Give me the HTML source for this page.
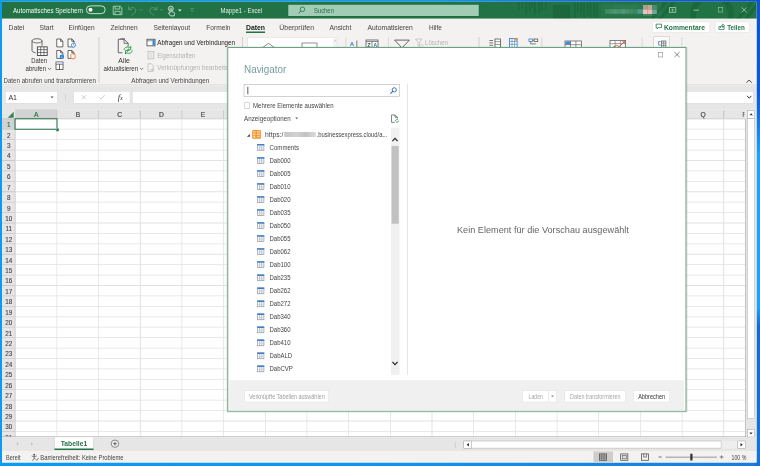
<!DOCTYPE html>
<html><head><meta charset="utf-8"><title>Excel Navigator</title>
<style>
html,body{margin:0;padding:0;}
body{width:760px;height:466px;overflow:hidden;position:relative;background:#0a9af0;font-family:"Liberation Sans",sans-serif;}
div,span.t,svg{position:absolute;}
span.t{white-space:nowrap;transform-origin:0 50%;}
svg{overflow:visible;}
#root{left:0;top:0;width:3040px;height:1864px;transform:scale(0.25);transform-origin:0 0;}
</style></head><body><div id="root">
<div style="left:0px;top:0px;width:3040px;height:1864px;background:#0c9bf0;"></div>
<div style="left:0px;top:0px;width:3040px;height:12px;background:linear-gradient(90deg,#0c9bf0 0%,#129af0 56%,#1460d6 82%,#0b52d4 100%);"></div>
<div style="left:0px;top:1840px;width:3040px;height:24px;background:linear-gradient(90deg,#0c9bf0 0%,#0f96ee 45%,#1a7cdc 100%);"></div>
<div style="left:3016px;top:0px;width:24px;height:1864px;background:linear-gradient(180deg,#0b53d4 0%,#0d58d8 20%,#1670de 25%,#18a2f8 33%,#18a2f8 66%,#1668d0 70%,#1a72d4 100%);"></div>
<div style="left:8.4px;top:6.8px;width:3018px;height:1843.2px;background:#ffffff;"></div>
<div style="left:8.4px;top:6.8px;width:3018px;height:68.4px;background:#217346;"></div>
<svg style="left:0px;top:6.8px;overflow:hidden;" width="3040" height="68.4" viewBox="0 0 760 17.1"><rect x="518.0" y="0" width="1.6" height="9" fill="rgba(10,60,30,0.2)"/><rect x="521.4" y="0" width="1.6" height="6" fill="rgba(10,60,30,0.2)"/><rect x="525.6" y="0" width="1.6" height="13" fill="rgba(10,60,30,0.2)"/><rect x="529.0" y="0" width="1.6" height="9" fill="rgba(10,60,30,0.2)"/><rect x="531.6" y="0" width="1.6" height="6" fill="rgba(10,60,30,0.2)"/><rect x="534.2" y="0" width="1.6" height="13" fill="rgba(10,60,30,0.2)"/><rect x="538.4" y="0" width="1.6" height="11" fill="rgba(10,60,30,0.2)"/><rect x="541.0" y="0" width="1.6" height="9" fill="rgba(10,60,30,0.2)"/><rect x="545.2" y="0" width="1.6" height="8" fill="rgba(10,60,30,0.2)"/><rect x="553" y="3" width="17" height="14.2" fill="rgba(10,60,30,0.2)"/><rect x="574.0" y="1" width="1.8" height="15" fill="rgba(10,60,30,0.2)"/><rect x="576.8" y="1" width="1.8" height="10" fill="rgba(10,60,30,0.2)"/><rect x="580.4" y="1" width="1.8" height="13" fill="rgba(10,60,30,0.2)"/><rect x="583.2" y="1" width="1.8" height="15" fill="rgba(10,60,30,0.2)"/><rect x="586.8" y="1" width="1.8" height="13" fill="rgba(10,60,30,0.2)"/><rect x="589.6" y="1" width="1.8" height="15" fill="rgba(10,60,30,0.2)"/><rect x="593.2" y="1" width="1.8" height="15" fill="rgba(10,60,30,0.2)"/><rect x="596.0" y="1" width="1.8" height="15" fill="rgba(10,60,30,0.2)"/><circle cx="712" cy="13" r="19" fill="none" stroke="rgba(10,60,30,0.2)" stroke-width="6"/><path d="M650 17.2L664 0H668L654 17.2Z M658 17.2L672 0H676L662 17.2Z M736 17.2L750 0H754L740 17.2Z M744 17.2L756 2V7L748 17.2Z" fill="rgba(10,60,30,0.2)"/></svg>
<span class="t" style="left:52px;top:28.44px;font-size:27.6px;line-height:27.6px;color:#f4faf6;transform:scaleX(0.8946);">Automatisches Speichern</span>
<div style="left:344px;top:21.6px;width:78.4px;height:34.4px;border:3.6px solid #fff;border-radius:20px;box-sizing:border-box;"></div>
<div style="left:353.6px;top:30.8px;width:16px;height:16px;border-radius:8px;background:#fff;"></div>
<svg style="left:451.2px;top:23.2px;" width="38.4" height="37.6" viewBox="0 0 9.6 9.4"><path d="M.5 .5H7.6L9.1 2V8.9H.5Z M2.4 .5V3.3H7V.5 M2.2 8.9V5.6H7.4V8.9" fill="none" stroke="#a9d0b8" stroke-width="0.9"/></svg>
<svg style="left:512px;top:22px;" width="36" height="40" viewBox="0 0 9 10"><path d="M.6 .8V4.2H4 M.8 4.1C2.4 1.9 5.6 1.4 7.2 3.3C8.7 5.3 7.2 7.7 3.6 9.6" fill="none" stroke="#5c9b77" stroke-width="0.9"/></svg>
<svg style="left:558.4px;top:36px;" width="12" height="8" viewBox="0 0 3 2"><path d="M0 0L1.5 1.6L3 0" fill="none" stroke="#5c9b77" stroke-width="0.7"/></svg>
<svg style="left:594.4px;top:22px;" width="36" height="40" viewBox="0 0 9 10"><path d="M8.4 .8V4.2H5 M8.2 4.1C6.6 1.9 3.4 1.4 1.8 3.3C.3 5.3 1.8 7.7 5.4 9.6" fill="none" stroke="#5c9b77" stroke-width="0.9"/></svg>
<svg style="left:640px;top:36px;" width="12" height="8" viewBox="0 0 3 2"><path d="M0 0L1.5 1.6L3 0" fill="none" stroke="#5c9b77" stroke-width="0.7"/></svg>
<svg style="left:669.2px;top:22.4px;" width="29.6" height="40" viewBox="0 0 7.4 10"><circle cx="3.6" cy="3.2" r="2.5" fill="none" stroke="#e6f1ea" stroke-width="0.8"/><path d="M2.9 7.6V3.2a.8.8 0 0 1 1.6 0V6.2L6.6 6.8C7.2 7 7.4 7.4 7.3 8L6.9 10.4H3.2L1.2 7.6C1.6 7 2.3 7.1 2.9 7.6Z" fill="#217346" stroke="#e6f1ea" stroke-width="0.8"/></svg>
<svg style="left:712px;top:38.4px;" width="14.4" height="8.8" viewBox="0 0 3.6 2.2"><path d="M0 0H3.6L1.8 2.1Z" fill="#e6f1ea"/></svg>
<svg style="left:761.6px;top:32.8px;" width="12.8" height="14.4" viewBox="0 0 3.2 3.6"><path d="M0 .3H3.2 M.2 1.6L1.6 3.2L3 1.6" fill="none" stroke="#6fa788" stroke-width="0.7"/></svg>
<span class="t" style="left:882.4px;top:28.44px;font-size:27.6px;line-height:27.6px;color:#e4efe8;transform:scaleX(0.8672);">Mappe1  -  Excel</span>
<div style="left:1152.8px;top:18.8px;width:762.4px;height:45.2px;background:#a0cdb3;box-shadow:0 0 0 2px #186a3c;"></div>
<svg style="left:1192.8px;top:26.4px;" width="28.8" height="29.6" viewBox="0 0 7.2 7.4"><circle cx="4.2" cy="2.8" r="2.3" fill="none" stroke="#217346" stroke-width="0.8"/><path d="M2.6 4.5L.4 7" stroke="#217346" stroke-width="0.9"/></svg>
<span class="t" style="left:1255.6px;top:28.04px;font-size:27.6px;line-height:27.6px;color:#2a6a47;transform:scaleX(0.8503);">Suchen</span>
<svg style="left:0px;top:0px;filter:blur(1.4px);" width="3040" height="80" viewBox="0 0 760 20"><rect x="601" y="4" width="61" height="12.4" fill="rgba(255,255,255,0.035)"/><rect x="605.00" y="9.2" width="4.1" height="4.6" fill="#3f8a62"/><rect x="609.05" y="9.2" width="4.1" height="4.6" fill="#4a906b"/><rect x="613.10" y="9.2" width="4.1" height="4.6" fill="#4f9671"/><rect x="617.15" y="9.2" width="4.1" height="4.6" fill="#4a906b"/><rect x="621.20" y="9.2" width="4.1" height="4.6" fill="#53977a"/><rect x="625.25" y="9.2" width="4.1" height="4.6" fill="#4a906b"/><rect x="629.30" y="9.2" width="4.1" height="4.6" fill="#458c66"/><rect x="633.35" y="9.2" width="4.1" height="4.6" fill="#3d8860"/><rect x="613" y="4.6" width="24" height="4.4" fill="#2c7b50"/><rect x="637.4" y="9.2" width="5.8" height="4.6" fill="#4f9a86"/><rect x="643" y="5" width="4.6" height="4.5" fill="#a89f8c"/><rect x="647.5" y="5" width="4.6" height="4.5" fill="#c4a58f"/><rect x="643" y="9.4" width="4.6" height="4.6" fill="#e9c3c4"/><rect x="647.5" y="9.4" width="4.6" height="4.6" fill="#f6b8b2"/><rect x="652" y="9.4" width="4.8" height="4.6" fill="#6aa89c"/><rect x="652" y="5" width="4.8" height="4.5" fill="#4c8c6c"/><rect x="643" y="14" width="9" height="2" fill="#3f8560"/></svg>
<svg style="left:2676px;top:28.8px;" width="28.8" height="21.6" viewBox="0 0 7.2 5.4"><rect x=".4" y=".4" width="6.4" height="4.6" fill="none" stroke="#b4d3c1" stroke-width="0.75"/><path d="M3.6 4.4V1.8M2.4 2.9L3.6 1.7L4.8 2.9" fill="none" stroke="#b4d3c1" stroke-width="0.7"/></svg>
<div style="left:2773.6px;top:38.8px;width:22.4px;height:2.8px;background:#b4d3c1;"></div>
<div style="left:2872px;top:28.8px;width:20px;height:20px;border:2.8px solid #b4d3c1;box-sizing:border-box;"></div>
<svg style="left:2966.4px;top:28.8px;" width="21.6" height="21.6" viewBox="0 0 5.4 5.4"><path d="M.2 .2L5.2 5.2M5.2 .2L.2 5.2" stroke="#c4dccd" stroke-width="0.7"/></svg>
<div style="left:8.4px;top:75.2px;width:3018px;height:264.8px;background:#f3f2f1;"></div>
<span class="t" style="left:34px;top:94.44px;font-size:28.4px;line-height:28.4px;color:#444;transform:scaleX(0.9532);">Datei</span>
<span class="t" style="left:158px;top:94.44px;font-size:28.4px;line-height:28.4px;color:#444;transform:scaleX(0.9470);">Start</span>
<span class="t" style="left:274px;top:94.44px;font-size:28.4px;line-height:28.4px;color:#444;transform:scaleX(0.9347);">Einfügen</span>
<span class="t" style="left:442px;top:94.44px;font-size:28.4px;line-height:28.4px;color:#444;transform:scaleX(0.9312);">Zeichnen</span>
<span class="t" style="left:614px;top:94.44px;font-size:28.4px;line-height:28.4px;color:#444;transform:scaleX(0.9340);">Seitenlayout</span>
<span class="t" style="left:824.8px;top:94.44px;font-size:28.4px;line-height:28.4px;color:#444;transform:scaleX(0.9332);">Formeln</span>
<span class="t" style="left:1116.8px;top:94.44px;font-size:28.4px;line-height:28.4px;color:#444;transform:scaleX(0.9797);">Überprüfen</span>
<span class="t" style="left:1317.6px;top:94.44px;font-size:28.4px;line-height:28.4px;color:#444;transform:scaleX(0.9363);">Ansicht</span>
<span class="t" style="left:1470.4px;top:94.44px;font-size:28.4px;line-height:28.4px;color:#444;transform:scaleX(0.9587);">Automatisieren</span>
<span class="t" style="left:1715.6px;top:94.44px;font-size:28.4px;line-height:28.4px;color:#444;transform:scaleX(0.9082);">Hilfe</span>
<span class="t" style="left:984px;top:94.44px;font-size:28.4px;line-height:28.4px;color:#222;font-weight:700;transform:scaleX(0.9632);">Daten</span>
<div style="left:984px;top:126.4px;width:76px;height:5.6px;background:#217346;"></div>
<div style="left:2609.2px;top:86.4px;width:230.8px;height:44.8px;background:#fff;border:2.4px solid #e1dfdd;box-sizing:border-box;border-radius:4px;"></div>
<svg style="left:2623.2px;top:95.2px;" width="24.8" height="23.2" viewBox="0 0 6.2 5.8"><path d="M.4 .4H5.8V3.9H2.6L1.4 5.2V3.9H.4Z" fill="none" stroke="#217346" stroke-width="0.8"/></svg>
<span class="t" style="left:2656px;top:94.84px;font-size:28.4px;line-height:28.4px;color:#217346;font-weight:700;transform:scaleX(0.9447);">Kommentare</span>
<div style="left:2860px;top:86.4px;width:138px;height:44.8px;background:#fff;border:2.4px solid #e1dfdd;box-sizing:border-box;border-radius:4px;"></div>
<svg style="left:2874px;top:93.6px;" width="26.4" height="25.6" viewBox="0 0 6.6 6.4"><path d="M.4 3.2V6H5.6V3.2H4.2M.4 3.2H1.8 M1.6 4.4C1.8 2.6 2.8 1.8 4.2 1.8V.5L6.2 2.3L4.2 4V2.9C3.2 2.9 2.4 3.2 1.6 4.4Z" fill="none" stroke="#217346" stroke-width="0.7"/></svg>
<span class="t" style="left:2908.8px;top:94.84px;font-size:28.4px;line-height:28.4px;color:#217346;font-weight:700;transform:scaleX(0.8754);">Teilen</span>
<svg style="left:124px;top:152.8px;" width="68" height="72" viewBox="0 0 17 18"><path d="M1 2.6C1 1.4 3.2 .5 6 .5S11 1.4 11 2.6V7.5 M1 2.6V12.4C1 13.4 2.4 14.2 4.6 14.5" fill="none" stroke="#555" stroke-width="0.9"/><path d="M1 2.6C1 3.8 3.2 4.7 6 4.7S11 3.8 11 2.6" fill="none" stroke="#555" stroke-width="0.8"/><rect x="6.4" y="8.6" width="9.8" height="8.6" fill="#fff" stroke="#444" stroke-width="0.9"/><path d="M6.4 11.4H16.2M6.4 14.3H16.2M9.7 8.6V17.2M13 8.6V17.2" stroke="#444" stroke-width="0.7"/></svg>
<span class="t" style="left:125.2px;top:226.84px;font-size:27.6px;line-height:27.6px;color:#333;transform:scaleX(0.8527);">Daten</span>
<span class="t" style="left:101.6px;top:260.04px;font-size:27.6px;line-height:27.6px;color:#333;transform:scaleX(0.8802);">abrufen</span>
<svg style="left:192px;top:271.2px;" width="12.8" height="8.8" viewBox="0 0 3.2 2.2"><path d="M0 .2L1.6 1.8L3.2 .2" fill="none" stroke="#444" stroke-width="0.7"/></svg>
<svg style="left:224.8px;top:154.4px;" width="32" height="36" viewBox="0 0 8 9"><path d="M.5 .5H4.4L6.6 2.7V8.4H.5Z M4.3 .5V2.8H6.6" fill="#fff" stroke="#444" stroke-width="0.8"/></svg>
<svg style="left:269.6px;top:154.4px;" width="32" height="36" viewBox="0 0 8 9"><path d="M.5 .5H4.4L6.6 2.7V8.4H.5Z M4.3 .5V2.8H6.6" fill="#fff" stroke="#444" stroke-width="0.8"/><circle cx="6" cy="6.6" r="2.1" fill="#fff" stroke="#2b88d8" stroke-width="0.8"/><path d="M6 5.4V6.7H7" fill="none" stroke="#2b88d8" stroke-width="0.6"/></svg>
<svg style="left:224.8px;top:200px;" width="32" height="36" viewBox="0 0 8 9"><path d="M.5 .5H4.4L6.6 2.7V8.4H.5Z M4.3 .5V2.8H6.6" fill="#fff" stroke="#444" stroke-width="0.8"/><circle cx="5.6" cy="6.8" r="2.2" fill="#1e7fd6"/><path d="M5.6 5.6V5.9M5.6 6.5V8" stroke="#fff" stroke-width="0.7"/></svg>
<svg style="left:269.6px;top:200px;" width="32" height="36" viewBox="0 0 8 9"><path d="M.5 .5H4.4L6.6 2.7V8.4H.5Z M4.3 .5V2.8H6.6" fill="#fff" stroke="#444" stroke-width="0.8"/><path d="M3.4 4.6C3.4 3.8 7.6 3.8 7.6 4.6V8.2C7.6 9 3.4 9 3.4 8.2Z" fill="#fff" stroke="#e8772e" stroke-width="0.9"/></svg>
<svg style="left:222.4px;top:246.4px;" width="32" height="34.4" viewBox="0 0 8 8.6"><rect x=".5" y=".5" width="7" height="7.4" fill="#fff" stroke="#444" stroke-width="0.8"/><path d="M.5 2.6H7.5M4 2.6V7.9" stroke="#444" stroke-width="0.8"/><rect x=".9" y=".9" width="6.2" height="1.4" fill="#c8ddf0"/></svg>
<span class="t" style="left:14.4px;top:308.48px;font-size:26.8px;line-height:26.8px;color:#444;transform:scaleX(0.9188);">Daten abrufen und transformieren</span>
<div style="left:394.4px;top:148px;width:3.2px;height:184px;background:#d2d0ce;"></div>
<svg style="left:471.2px;top:152.8px;" width="64" height="72" viewBox="0 0 16 18"><path d="M.5 1H6.4L10.4 5V8 M.5 1V14.5H4.6" fill="none" stroke="#555" stroke-width="0.9"/><path d="M2.6 .5H7.2 M6.3 1V5.1H10.4" fill="none" stroke="#555" stroke-width="0.8"/><path d="M6.2 11.6C6.6 9.2 9.6 7.8 12.2 9.4L13 8V11.6H9.8L11.2 10.4" fill="none" stroke="#2ea04a" stroke-width="1"/><path d="M14.6 12.2C14.2 14.8 11.2 16 8.6 14.4L7.8 15.8V12.2H11L9.6 13.4" fill="none" stroke="#2ea04a" stroke-width="1"/></svg>
<span class="t" style="left:473.2px;top:226.84px;font-size:27.6px;line-height:27.6px;color:#333;">Alle</span>
<span class="t" style="left:414.4px;top:260.04px;font-size:27.6px;line-height:27.6px;color:#333;transform:scaleX(0.8931);">aktualisieren</span>
<svg style="left:560px;top:271.2px;" width="12.8" height="8.8" viewBox="0 0 3.2 2.2"><path d="M0 .2L1.6 1.8L3.2 .2" fill="none" stroke="#444" stroke-width="0.7"/></svg>
<svg style="left:585.6px;top:155.2px;" width="36" height="32" viewBox="0 0 9 8"><rect x=".5" y=".5" width="8" height="6.6" fill="#fff" stroke="#444" stroke-width="0.8"/><rect x="6" y=".9" width="2.2" height="5.8" fill="#2b88d8"/><path d="M.5 2H6" stroke="#444" stroke-width="0.6"/></svg>
<span class="t" style="left:628.8px;top:158.44px;font-size:27.6px;line-height:27.6px;color:#222;transform:scaleX(0.9052);">Abfragen und Verbindungen</span>
<svg style="left:590.4px;top:204px;" width="28" height="34.4" viewBox="0 0 7 8.6"><rect x=".5" y=".5" width="5.8" height="7.4" fill="none" stroke="#bdbbb9" stroke-width="0.8"/><path d="M2 2.6H4.8M2 4.2H4.8M2 5.8H4.8" stroke="#c8c6c4" stroke-width="0.6"/></svg>
<span class="t" style="left:628.8px;top:208.04px;font-size:27.6px;line-height:27.6px;color:#b5b3b1;transform:scaleX(0.8735);">Eigenschaften</span>
<svg style="left:590.4px;top:252.8px;" width="32" height="36" viewBox="0 0 8 9"><path d="M.5 .5H3.8L5.6 2.3V8.2H.5Z" fill="none" stroke="#bdbbb9" stroke-width="0.8"/><path d="M3 6.4H6.6" stroke="#c8c6c4" stroke-width="1.4"/></svg>
<span class="t" style="left:628.8px;top:258.44px;font-size:27.6px;line-height:27.6px;color:#b5b3b1;transform:scaleX(0.9240);">Verknüpfungen bearbeiten</span>
<span class="t" style="left:525.2px;top:308.48px;font-size:26.8px;line-height:26.8px;color:#444;transform:scaleX(0.9347);">Abfragen und Verbindungen</span>
<div style="left:969.2px;top:148px;width:3.2px;height:184px;background:#c8c6c4;"></div>
<div style="left:990.4px;top:148px;width:360px;height:56px;background:#fff;border:2.8px solid #d8d6d4;box-sizing:border-box;"></div>
<div style="left:1332px;top:149.6px;width:17.6px;height:52px;background:#f3f2f1;"></div>
<svg style="left:1336px;top:160px;" width="10.4" height="8" viewBox="0 0 2.6 2"><path d="M0 1.6L1.3 .2L2.6 1.6" fill="none" stroke="#999" stroke-width="0.5"/></svg>
<svg style="left:1046px;top:171.2px;" width="56" height="24" viewBox="0 0 14 6"><path d="M0 5.6L7 .6L14 5.6" fill="none" stroke="#666" stroke-width="0.8"/></svg>
<svg style="left:1206.4px;top:170.4px;" width="61.6" height="20" viewBox="0 0 15.4 5"><rect x=".5" y=".5" width="15" height="6" fill="none" stroke="#777" stroke-width="0.8"/></svg>
<div style="left:1381.6px;top:148px;width:3.2px;height:184px;background:#d2d0ce;"></div>
<span class="t" style="left:1400px;top:164.36px;font-size:22.4px;line-height:22.4px;color:#2b6fc4;font-weight:700;transform:scaleX(0.9891);">A</span>
<div style="left:1425.6px;top:162.4px;width:3.2px;height:28px;background:#555;"></div>
<svg style="left:1462.4px;top:158.4px;" width="52" height="32" viewBox="0 0 13 8"><rect x=".5" y=".5" width="12" height="9" fill="#fff" stroke="#555" stroke-width="0.8"/><path d="M.5 2H12.5 M6.5 2V9" stroke="#555" stroke-width="0.7"/></svg>
<span class="t" style="left:1468.8px;top:171.24px;font-size:18.4px;line-height:18.4px;color:#444;font-weight:700;transform:scaleX(1.2100);">Z</span>
<span class="t" style="left:1493.6px;top:171.24px;font-size:18.4px;line-height:18.4px;color:#2b6fc4;font-weight:700;transform:scaleX(1.0837);">A</span>
<div style="left:1552.8px;top:148px;width:3.2px;height:184px;background:#d2d0ce;"></div>
<svg style="left:1576px;top:158.4px;" width="64" height="32" viewBox="0 0 16 8"><path d="M.6 .6H15.4L8 8.4Z" fill="none" stroke="#555" stroke-width="0.9"/></svg>
<svg style="left:1660px;top:153.6px;" width="36" height="36" viewBox="0 0 9 9"><path d="M.5 .5H7L4.6 3.6V8L3 7.2V3.6Z" fill="none" stroke="#c0bebc" stroke-width="0.8"/><path d="M5.6 5.4L8.4 8.2M8.4 5.4L5.6 8.2" stroke="#c8c6c4" stroke-width="0.7"/></svg>
<span class="t" style="left:1700px;top:158.44px;font-size:27.6px;line-height:27.6px;color:#b5b3b1;transform:scaleX(0.8816);">Löschen</span>
<div style="left:1914.4px;top:148px;width:3.2px;height:184px;background:#d2d0ce;"></div>
<svg style="left:1956px;top:154.4px;" width="48" height="36" viewBox="0 0 12 9"><path d="M.4 2H4M.4 4.4H4M.4 6.8H4" stroke="#555" stroke-width="0.8"/><rect x="6" y=".5" width="5.4" height="9" fill="#fff" stroke="#555" stroke-width="0.8"/><path d="M6 3.2H11.4M6 6H11.4" stroke="#555" stroke-width="0.6"/></svg>
<svg style="left:2036px;top:152px;" width="36" height="38.4" viewBox="0 0 9 9.6"><rect x=".5" y=".5" width="7.6" height="9" fill="#fff" stroke="#3b78c4" stroke-width="0.8"/><path d="M.5 3.4H8.1M.5 6.3H8.1M3 .5V9.5M5.6 .5V9.5" stroke="#3b78c4" stroke-width="0.6"/><path d="M5.4 .4L7 2.6L8.6 .2" fill="#f0a030" stroke="#e07a1a" stroke-width="0.6"/></svg>
<svg style="left:2114.4px;top:153.6px;" width="40" height="24" viewBox="0 0 10 6"><rect x=".5" y=".5" width="3.4" height="2.4" fill="#fff" stroke="#3b78c4" stroke-width="0.8"/><rect x="5.6" y=".5" width="3.6" height="2.4" fill="#fff" stroke="#555" stroke-width="0.8"/><path d="M3.9 1.7H5.6 M2.2 2.9V5.4H7.4" fill="none" stroke="#555" stroke-width="0.7"/></svg>
<div style="left:2165.6px;top:148px;width:3.2px;height:184px;background:#d2d0ce;"></div>
<svg style="left:2258.4px;top:161.6px;" width="72" height="32" viewBox="0 0 18 8"><rect x=".5" y=".5" width="16.4" height="9" fill="#fff" stroke="#666" stroke-width="0.8"/><rect x=".9" y=".9" width="5" height="3.2" fill="#3b8ae0"/><path d="M.5 4.2H16.9M6 .5V9.5M11.4 .5V9.5" stroke="#666" stroke-width="0.7"/></svg>
<svg style="left:2438.4px;top:160px;" width="68" height="32" viewBox="0 0 17 8"><rect x=".5" y=".5" width="15.6" height="9" fill="#fff" stroke="#666" stroke-width="0.8"/><path d="M.5 3.6H16.1M5.6 .5V9.5M10.8 .5V9.5" stroke="#666" stroke-width="0.6"/><path d="M3 7.6L7 5.4L10 6.6L14.8 1.6" fill="none" stroke="#e0453a" stroke-width="0.9"/><path d="M12.6 1.2H15.2V3.8" fill="none" stroke="#e0453a" stroke-width="0.8"/></svg>
<div style="left:2567.2px;top:148px;width:3.2px;height:184px;background:#d2d0ce;"></div>
<div style="left:2613.6px;top:146.4px;width:66.4px;height:80px;background:#fafafa;border:2.8px solid #bdbbb9;box-sizing:border-box;"></div>
<svg style="left:2630.4px;top:162.4px;" width="36" height="28" viewBox="0 0 9 7"><path d="M3 1H1.2V4.6H3" fill="none" stroke="#3b78c4" stroke-width="0.8"/><rect x="4" y=".5" width="4.4" height="7" fill="#fff" stroke="#555" stroke-width="0.7"/><path d="M4 2.6H8.4M4 4.8H8.4M6.2 .5V7" stroke="#555" stroke-width="0.6"/></svg>
<div style="left:2725.6px;top:148px;width:3.2px;height:184px;background:#d2d0ce;"></div>
<svg style="left:2985.2px;top:318.4px;" width="23.2" height="14.4" viewBox="0 0 5.8 3.6"><path d="M.3 3.2L2.9 .5L5.5 3.2" fill="none" stroke="#444" stroke-width="1"/></svg>
<div style="left:8.4px;top:337.6px;width:3018px;height:3.2px;background:#d6d4d2;"></div>
<div style="left:8.4px;top:340.8px;width:3018px;height:96px;background:#e6e6e6;"></div>
<div style="left:20px;top:364px;width:209.6px;height:50.4px;background:#fff;border:2.4px solid #d0d0d0;box-sizing:border-box;"></div>
<span class="t" style="left:33.6px;top:375.04px;font-size:28px;line-height:28px;color:#333;">A1</span>
<svg style="left:202.4px;top:385.6px;" width="12.8" height="8" viewBox="0 0 3.2 2"><path d="M0 0H3.2L1.6 1.8Z" fill="#555"/></svg>
<div style="left:260.8px;top:377.6px;width:3.6px;height:3.6px;background:#aaa;"></div>
<div style="left:260.8px;top:387.2px;width:3.6px;height:3.6px;background:#aaa;"></div>
<div style="left:260.8px;top:396.8px;width:3.6px;height:3.6px;background:#aaa;"></div>
<div style="left:294.4px;top:364px;width:226.4px;height:50.4px;background:#fff;border:2.4px solid #d0d0d0;box-sizing:border-box;"></div>
<svg style="left:325.6px;top:380px;" width="18.4" height="18.4" viewBox="0 0 4.6 4.6"><path d="M.2 .2L4.4 4.4M4.4 .2L.2 4.4" stroke="#b8b8b8" stroke-width="0.7"/></svg>
<svg style="left:396px;top:378.4px;" width="24" height="20" viewBox="0 0 6 5"><path d="M.3 2.8L2.2 4.6L5.7 .4" fill="none" stroke="#b8b8b8" stroke-width="0.7"/></svg>
<span class="t" style="left:471.2px;top:368.8px;font-size:34.4px;line-height:36px;color:#333;font-family:'Liberation Serif',serif;font-style:italic;">f<span style="font-size:22.4px;">x</span></span>
<div style="left:528px;top:364px;width:2485.6px;height:50.4px;background:#fff;border:2.4px solid #d0d0d0;box-sizing:border-box;"></div>
<svg style="left:2986.8px;top:382px;" width="20" height="12.8" viewBox="0 0 5 3.2"><path d="M.3 .3L2.5 2.7L4.7 .3" fill="none" stroke="#333" stroke-width="1"/></svg>
<div style="left:8px;top:436.8px;width:2972.8px;height:38.4px;background:#e6e6e6;"></div>
<div style="left:8px;top:436.8px;width:52.8px;height:1310.4px;background:#e6e6e6;"></div>
<div style="left:60.8px;top:436.8px;width:166.72px;height:38.4px;background:#d2d2d2;"></div>
<div style="left:8px;top:475.2px;width:52.8px;height:41.68px;background:#d2d2d2;"></div>
<svg style="left:29.6px;top:445.6px;" width="25.6" height="25.6" viewBox="0 0 6.4 6.4"><path d="M6.2 .2V6.2H.2Z" fill="#3f7f5c"/></svg>
<div style="left:225.92px;top:440.8px;width:3.2px;height:34.4px;background:#c4c4c4;"></div>
<span class="t" style="left:136.44px;top:445.28px;font-size:26.8px;line-height:26.8px;color:#217346;-webkit-text-stroke:0.72px #217346;">A</span>
<div style="left:392.64px;top:440.8px;width:3.2px;height:34.4px;background:#c4c4c4;"></div>
<span class="t" style="left:303.16px;top:445.28px;font-size:26.8px;line-height:26.8px;color:#444;-webkit-text-stroke:0.72px #444;">B</span>
<div style="left:559.36px;top:440.8px;width:3.2px;height:34.4px;background:#c4c4c4;"></div>
<span class="t" style="left:469.12px;top:445.28px;font-size:26.8px;line-height:26.8px;color:#444;-webkit-text-stroke:0.72px #444;">C</span>
<div style="left:726.08px;top:440.8px;width:3.2px;height:34.4px;background:#c4c4c4;"></div>
<span class="t" style="left:635.84px;top:445.28px;font-size:26.8px;line-height:26.8px;color:#444;-webkit-text-stroke:0.72px #444;">D</span>
<div style="left:892.8px;top:440.8px;width:3.2px;height:34.4px;background:#c4c4c4;"></div>
<span class="t" style="left:803.32px;top:445.28px;font-size:26.8px;line-height:26.8px;color:#444;-webkit-text-stroke:0.72px #444;">E</span>
<div style="left:1059.52px;top:440.8px;width:3.2px;height:34.4px;background:#c4c4c4;"></div>
<span class="t" style="left:970.76px;top:445.28px;font-size:26.8px;line-height:26.8px;color:#444;-webkit-text-stroke:0.72px #444;">F</span>
<div style="left:1226.24px;top:440.8px;width:3.2px;height:34.4px;background:#c4c4c4;"></div>
<span class="t" style="left:1135.24px;top:445.28px;font-size:26.8px;line-height:26.8px;color:#444;-webkit-text-stroke:0.72px #444;">G</span>
<div style="left:1392.96px;top:440.8px;width:3.2px;height:34.4px;background:#c4c4c4;"></div>
<span class="t" style="left:1302.72px;top:445.28px;font-size:26.8px;line-height:26.8px;color:#444;-webkit-text-stroke:0.72px #444;">H</span>
<div style="left:1559.68px;top:440.8px;width:3.2px;height:34.4px;background:#c4c4c4;"></div>
<span class="t" style="left:1475.4px;top:445.28px;font-size:26.8px;line-height:26.8px;color:#444;-webkit-text-stroke:0.72px #444;">I</span>
<div style="left:1726.4px;top:440.8px;width:3.2px;height:34.4px;background:#c4c4c4;"></div>
<span class="t" style="left:1639.12px;top:445.28px;font-size:26.8px;line-height:26.8px;color:#444;-webkit-text-stroke:0.72px #444;">J</span>
<div style="left:1893.12px;top:440.8px;width:3.2px;height:34.4px;background:#c4c4c4;"></div>
<span class="t" style="left:1803.64px;top:445.28px;font-size:26.8px;line-height:26.8px;color:#444;-webkit-text-stroke:0.72px #444;">K</span>
<div style="left:2059.84px;top:440.8px;width:3.2px;height:34.4px;background:#c4c4c4;"></div>
<span class="t" style="left:1971.84px;top:445.28px;font-size:26.8px;line-height:26.8px;color:#444;-webkit-text-stroke:0.72px #444;">L</span>
<div style="left:2226.56px;top:440.8px;width:3.2px;height:34.4px;background:#c4c4c4;"></div>
<span class="t" style="left:2134.84px;top:445.28px;font-size:26.8px;line-height:26.8px;color:#444;-webkit-text-stroke:0.72px #444;">M</span>
<div style="left:2393.28px;top:440.8px;width:3.2px;height:34.4px;background:#c4c4c4;"></div>
<span class="t" style="left:2303.04px;top:445.28px;font-size:26.8px;line-height:26.8px;color:#444;-webkit-text-stroke:0.72px #444;">N</span>
<div style="left:2560px;top:440.8px;width:3.2px;height:34.4px;background:#c4c4c4;"></div>
<span class="t" style="left:2469px;top:445.28px;font-size:26.8px;line-height:26.8px;color:#444;-webkit-text-stroke:0.72px #444;">O</span>
<div style="left:2726.72px;top:440.8px;width:3.2px;height:34.4px;background:#c4c4c4;"></div>
<span class="t" style="left:2637.24px;top:445.28px;font-size:26.8px;line-height:26.8px;color:#444;-webkit-text-stroke:0.72px #444;">P</span>
<div style="left:2893.44px;top:440.8px;width:3.2px;height:34.4px;background:#c4c4c4;"></div>
<span class="t" style="left:2802.44px;top:445.28px;font-size:26.8px;line-height:26.8px;color:#444;-webkit-text-stroke:0.72px #444;">Q</span>
<div style="left:2895.04px;top:436.8px;width:83.36px;height:38.4px;overflow:hidden;"><span class="t" style="left:73.76px;top:8.4px;font-size:26.8px;line-height:28px;color:#444;">R</span></div>
<div style="left:8px;top:473.6px;width:2972.8px;height:3.2px;background:#c4c4c4;"></div>
<div style="left:225.92px;top:476.8px;width:3.2px;height:1270.4px;background:#e2e2e2;"></div>
<div style="left:392.64px;top:476.8px;width:3.2px;height:1270.4px;background:#e2e2e2;"></div>
<div style="left:559.36px;top:476.8px;width:3.2px;height:1270.4px;background:#e2e2e2;"></div>
<div style="left:726.08px;top:476.8px;width:3.2px;height:1270.4px;background:#e2e2e2;"></div>
<div style="left:892.8px;top:476.8px;width:3.2px;height:1270.4px;background:#e2e2e2;"></div>
<div style="left:1059.52px;top:476.8px;width:3.2px;height:1270.4px;background:#e2e2e2;"></div>
<div style="left:1226.24px;top:476.8px;width:3.2px;height:1270.4px;background:#e2e2e2;"></div>
<div style="left:1392.96px;top:476.8px;width:3.2px;height:1270.4px;background:#e2e2e2;"></div>
<div style="left:1559.68px;top:476.8px;width:3.2px;height:1270.4px;background:#e2e2e2;"></div>
<div style="left:1726.4px;top:476.8px;width:3.2px;height:1270.4px;background:#e2e2e2;"></div>
<div style="left:1893.12px;top:476.8px;width:3.2px;height:1270.4px;background:#e2e2e2;"></div>
<div style="left:2059.84px;top:476.8px;width:3.2px;height:1270.4px;background:#e2e2e2;"></div>
<div style="left:2226.56px;top:476.8px;width:3.2px;height:1270.4px;background:#e2e2e2;"></div>
<div style="left:2393.28px;top:476.8px;width:3.2px;height:1270.4px;background:#e2e2e2;"></div>
<div style="left:2560px;top:476.8px;width:3.2px;height:1270.4px;background:#e2e2e2;"></div>
<div style="left:2726.72px;top:476.8px;width:3.2px;height:1270.4px;background:#e2e2e2;"></div>
<div style="left:2893.44px;top:476.8px;width:3.2px;height:1270.4px;background:#e2e2e2;"></div>
<div style="left:59.2px;top:476.8px;width:3.2px;height:1270.4px;background:#c4c4c4;"></div>
<div style="left:60.8px;top:515.28px;width:2920px;height:3.2px;background:#e2e2e2;"></div>
<div style="left:8px;top:515.28px;width:52.8px;height:3.2px;background:#c9c9c9;"></div>
<span class="t" style="left:28.12px;top:485.28px;font-size:27.6px;line-height:27.6px;color:#217346;transform:scaleX(0.9225);-webkit-text-stroke:0.48px #217346;">1</span>
<div style="left:60.8px;top:556.96px;width:2920px;height:3.2px;background:#e2e2e2;"></div>
<div style="left:8px;top:556.96px;width:52.8px;height:3.2px;background:#c9c9c9;"></div>
<span class="t" style="left:28.12px;top:526.96px;font-size:27.6px;line-height:27.6px;color:#444;transform:scaleX(0.9225);-webkit-text-stroke:0.48px #444;">2</span>
<div style="left:60.8px;top:598.64px;width:2920px;height:3.2px;background:#e2e2e2;"></div>
<div style="left:8px;top:598.64px;width:52.8px;height:3.2px;background:#c9c9c9;"></div>
<span class="t" style="left:28.12px;top:568.64px;font-size:27.6px;line-height:27.6px;color:#444;transform:scaleX(0.9225);-webkit-text-stroke:0.48px #444;">3</span>
<div style="left:60.8px;top:640.32px;width:2920px;height:3.2px;background:#e2e2e2;"></div>
<div style="left:8px;top:640.32px;width:52.8px;height:3.2px;background:#c9c9c9;"></div>
<span class="t" style="left:28.12px;top:610.32px;font-size:27.6px;line-height:27.6px;color:#444;transform:scaleX(0.9225);-webkit-text-stroke:0.48px #444;">4</span>
<div style="left:60.8px;top:682px;width:2920px;height:3.2px;background:#e2e2e2;"></div>
<div style="left:8px;top:682px;width:52.8px;height:3.2px;background:#c9c9c9;"></div>
<span class="t" style="left:28.12px;top:652px;font-size:27.6px;line-height:27.6px;color:#444;transform:scaleX(0.9225);-webkit-text-stroke:0.48px #444;">5</span>
<div style="left:60.8px;top:723.68px;width:2920px;height:3.2px;background:#e2e2e2;"></div>
<div style="left:8px;top:723.68px;width:52.8px;height:3.2px;background:#c9c9c9;"></div>
<span class="t" style="left:28.12px;top:693.68px;font-size:27.6px;line-height:27.6px;color:#444;transform:scaleX(0.9225);-webkit-text-stroke:0.48px #444;">6</span>
<div style="left:60.8px;top:765.36px;width:2920px;height:3.2px;background:#e2e2e2;"></div>
<div style="left:8px;top:765.36px;width:52.8px;height:3.2px;background:#c9c9c9;"></div>
<span class="t" style="left:28.12px;top:735.36px;font-size:27.6px;line-height:27.6px;color:#444;transform:scaleX(0.9225);-webkit-text-stroke:0.48px #444;">7</span>
<div style="left:60.8px;top:807.04px;width:2920px;height:3.2px;background:#e2e2e2;"></div>
<div style="left:8px;top:807.04px;width:52.8px;height:3.2px;background:#c9c9c9;"></div>
<span class="t" style="left:28.12px;top:777.04px;font-size:27.6px;line-height:27.6px;color:#444;transform:scaleX(0.9225);-webkit-text-stroke:0.48px #444;">8</span>
<div style="left:60.8px;top:848.72px;width:2920px;height:3.2px;background:#e2e2e2;"></div>
<div style="left:8px;top:848.72px;width:52.8px;height:3.2px;background:#c9c9c9;"></div>
<span class="t" style="left:28.12px;top:818.72px;font-size:27.6px;line-height:27.6px;color:#444;transform:scaleX(0.9225);-webkit-text-stroke:0.48px #444;">9</span>
<div style="left:60.8px;top:890.4px;width:2920px;height:3.2px;background:#e2e2e2;"></div>
<div style="left:8px;top:890.4px;width:52.8px;height:3.2px;background:#c9c9c9;"></div>
<span class="t" style="left:21.08px;top:860.4px;font-size:27.6px;line-height:27.6px;color:#444;transform:scaleX(0.9198);-webkit-text-stroke:0.48px #444;">10</span>
<div style="left:60.8px;top:932.08px;width:2920px;height:3.2px;background:#e2e2e2;"></div>
<div style="left:8px;top:932.08px;width:52.8px;height:3.2px;background:#c9c9c9;"></div>
<span class="t" style="left:22px;top:902.08px;font-size:27.6px;line-height:27.6px;color:#444;transform:scaleX(0.9214);-webkit-text-stroke:0.48px #444;">11</span>
<div style="left:60.8px;top:973.76px;width:2920px;height:3.2px;background:#e2e2e2;"></div>
<div style="left:8px;top:973.76px;width:52.8px;height:3.2px;background:#c9c9c9;"></div>
<span class="t" style="left:21.08px;top:943.76px;font-size:27.6px;line-height:27.6px;color:#444;transform:scaleX(0.9198);-webkit-text-stroke:0.48px #444;">12</span>
<div style="left:60.8px;top:1015.44px;width:2920px;height:3.2px;background:#e2e2e2;"></div>
<div style="left:8px;top:1015.44px;width:52.8px;height:3.2px;background:#c9c9c9;"></div>
<span class="t" style="left:21.08px;top:985.44px;font-size:27.6px;line-height:27.6px;color:#444;transform:scaleX(0.9198);-webkit-text-stroke:0.48px #444;">13</span>
<div style="left:60.8px;top:1057.12px;width:2920px;height:3.2px;background:#e2e2e2;"></div>
<div style="left:8px;top:1057.12px;width:52.8px;height:3.2px;background:#c9c9c9;"></div>
<span class="t" style="left:21.08px;top:1027.12px;font-size:27.6px;line-height:27.6px;color:#444;transform:scaleX(0.9198);-webkit-text-stroke:0.48px #444;">14</span>
<div style="left:60.8px;top:1098.8px;width:2920px;height:3.2px;background:#e2e2e2;"></div>
<div style="left:8px;top:1098.8px;width:52.8px;height:3.2px;background:#c9c9c9;"></div>
<span class="t" style="left:21.08px;top:1068.8px;font-size:27.6px;line-height:27.6px;color:#444;transform:scaleX(0.9198);-webkit-text-stroke:0.48px #444;">15</span>
<div style="left:60.8px;top:1140.48px;width:2920px;height:3.2px;background:#e2e2e2;"></div>
<div style="left:8px;top:1140.48px;width:52.8px;height:3.2px;background:#c9c9c9;"></div>
<span class="t" style="left:21.08px;top:1110.48px;font-size:27.6px;line-height:27.6px;color:#444;transform:scaleX(0.9198);-webkit-text-stroke:0.48px #444;">16</span>
<div style="left:60.8px;top:1182.16px;width:2920px;height:3.2px;background:#e2e2e2;"></div>
<div style="left:8px;top:1182.16px;width:52.8px;height:3.2px;background:#c9c9c9;"></div>
<span class="t" style="left:21.08px;top:1152.16px;font-size:27.6px;line-height:27.6px;color:#444;transform:scaleX(0.9198);-webkit-text-stroke:0.48px #444;">17</span>
<div style="left:60.8px;top:1223.84px;width:2920px;height:3.2px;background:#e2e2e2;"></div>
<div style="left:8px;top:1223.84px;width:52.8px;height:3.2px;background:#c9c9c9;"></div>
<span class="t" style="left:21.08px;top:1193.84px;font-size:27.6px;line-height:27.6px;color:#444;transform:scaleX(0.9198);-webkit-text-stroke:0.48px #444;">18</span>
<div style="left:60.8px;top:1265.52px;width:2920px;height:3.2px;background:#e2e2e2;"></div>
<div style="left:8px;top:1265.52px;width:52.8px;height:3.2px;background:#c9c9c9;"></div>
<span class="t" style="left:21.08px;top:1235.52px;font-size:27.6px;line-height:27.6px;color:#444;transform:scaleX(0.9198);-webkit-text-stroke:0.48px #444;">19</span>
<div style="left:60.8px;top:1307.2px;width:2920px;height:3.2px;background:#e2e2e2;"></div>
<div style="left:8px;top:1307.2px;width:52.8px;height:3.2px;background:#c9c9c9;"></div>
<span class="t" style="left:21.08px;top:1277.2px;font-size:27.6px;line-height:27.6px;color:#444;transform:scaleX(0.9198);-webkit-text-stroke:0.48px #444;">20</span>
<div style="left:60.8px;top:1348.88px;width:2920px;height:3.2px;background:#e2e2e2;"></div>
<div style="left:8px;top:1348.88px;width:52.8px;height:3.2px;background:#c9c9c9;"></div>
<span class="t" style="left:21.08px;top:1318.88px;font-size:27.6px;line-height:27.6px;color:#444;transform:scaleX(0.9198);-webkit-text-stroke:0.48px #444;">21</span>
<div style="left:60.8px;top:1390.56px;width:2920px;height:3.2px;background:#e2e2e2;"></div>
<div style="left:8px;top:1390.56px;width:52.8px;height:3.2px;background:#c9c9c9;"></div>
<span class="t" style="left:21.08px;top:1360.56px;font-size:27.6px;line-height:27.6px;color:#444;transform:scaleX(0.9198);-webkit-text-stroke:0.48px #444;">22</span>
<div style="left:60.8px;top:1432.24px;width:2920px;height:3.2px;background:#e2e2e2;"></div>
<div style="left:8px;top:1432.24px;width:52.8px;height:3.2px;background:#c9c9c9;"></div>
<span class="t" style="left:21.08px;top:1402.24px;font-size:27.6px;line-height:27.6px;color:#444;transform:scaleX(0.9198);-webkit-text-stroke:0.48px #444;">23</span>
<div style="left:60.8px;top:1473.92px;width:2920px;height:3.2px;background:#e2e2e2;"></div>
<div style="left:8px;top:1473.92px;width:52.8px;height:3.2px;background:#c9c9c9;"></div>
<span class="t" style="left:21.08px;top:1443.92px;font-size:27.6px;line-height:27.6px;color:#444;transform:scaleX(0.9198);-webkit-text-stroke:0.48px #444;">24</span>
<div style="left:60.8px;top:1515.6px;width:2920px;height:3.2px;background:#e2e2e2;"></div>
<div style="left:8px;top:1515.6px;width:52.8px;height:3.2px;background:#c9c9c9;"></div>
<span class="t" style="left:21.08px;top:1485.6px;font-size:27.6px;line-height:27.6px;color:#444;transform:scaleX(0.9198);-webkit-text-stroke:0.48px #444;">25</span>
<div style="left:60.8px;top:1557.28px;width:2920px;height:3.2px;background:#e2e2e2;"></div>
<div style="left:8px;top:1557.28px;width:52.8px;height:3.2px;background:#c9c9c9;"></div>
<span class="t" style="left:21.08px;top:1527.28px;font-size:27.6px;line-height:27.6px;color:#444;transform:scaleX(0.9198);-webkit-text-stroke:0.48px #444;">26</span>
<div style="left:60.8px;top:1598.96px;width:2920px;height:3.2px;background:#e2e2e2;"></div>
<div style="left:8px;top:1598.96px;width:52.8px;height:3.2px;background:#c9c9c9;"></div>
<span class="t" style="left:21.08px;top:1568.96px;font-size:27.6px;line-height:27.6px;color:#444;transform:scaleX(0.9198);-webkit-text-stroke:0.48px #444;">27</span>
<div style="left:60.8px;top:1640.64px;width:2920px;height:3.2px;background:#e2e2e2;"></div>
<div style="left:8px;top:1640.64px;width:52.8px;height:3.2px;background:#c9c9c9;"></div>
<span class="t" style="left:21.08px;top:1610.64px;font-size:27.6px;line-height:27.6px;color:#444;transform:scaleX(0.9198);-webkit-text-stroke:0.48px #444;">28</span>
<div style="left:60.8px;top:1682.32px;width:2920px;height:3.2px;background:#e2e2e2;"></div>
<div style="left:8px;top:1682.32px;width:52.8px;height:3.2px;background:#c9c9c9;"></div>
<span class="t" style="left:21.08px;top:1652.32px;font-size:27.6px;line-height:27.6px;color:#444;transform:scaleX(0.9198);-webkit-text-stroke:0.48px #444;">29</span>
<div style="left:60.8px;top:1724px;width:2920px;height:3.2px;background:#e2e2e2;"></div>
<div style="left:8px;top:1724px;width:52.8px;height:3.2px;background:#c9c9c9;"></div>
<span class="t" style="left:21.08px;top:1694px;font-size:27.6px;line-height:27.6px;color:#444;transform:scaleX(0.9198);-webkit-text-stroke:0.48px #444;">30</span>
<div style="left:8px;top:1725.6px;width:52px;height:21.6px;overflow:hidden;"><span class="t" style="left:11.84px;top:9.2px;font-size:27.6px;line-height:28px;color:#444;">31</span></div>
<div style="left:58.4px;top:472.8px;width:171.52px;height:46.48px;border:4.8px solid #217346;box-sizing:border-box;"></div>
<div style="left:223.92px;top:513.28px;width:9.6px;height:9.6px;background:#217346;border:1.6px solid #fff;box-sizing:content-box;"></div>
<div style="left:2980.8px;top:436.8px;width:45.6px;height:1312.8px;background:#e6e6e6;"></div>
<div style="left:2988.8px;top:472.8px;width:30px;height:1201.6px;background:#fff;border:2.8px solid #ababab;box-sizing:border-box;"></div>
<div style="left:2988.8px;top:440.8px;width:30px;height:33.2px;background:#fff;border:2.4px solid #999;box-sizing:border-box;"></div>
<svg style="left:2997.6px;top:452px;" width="13.6" height="8.8" viewBox="0 0 3.4 2.2"><path d="M0 2.2L1.7 .2L3.4 2.2Z" fill="#333"/></svg>
<div style="left:2988.8px;top:1716.8px;width:30px;height:32px;background:#fff;border:2.4px solid #999;box-sizing:border-box;"></div>
<svg style="left:2997.2px;top:1729.6px;" width="13.6" height="8.8" viewBox="0 0 3.4 2.2"><path d="M0 0L1.7 2L3.4 0Z" fill="#333"/></svg>
<div style="left:8.4px;top:1746px;width:2975.2px;height:3.2px;background:#a0a0a0;"></div>
<div style="left:2980px;top:475.2px;width:2.8px;height:1272px;background:#b4b4b4;"></div>
<div style="left:8.4px;top:1749.6px;width:3018px;height:56px;background:#e6e6e6;"></div>
<svg style="left:64px;top:1768px;" width="8.8" height="13.6" viewBox="0 0 2.2 3.4"><path d="M2.2 0V3.4L.1 1.7Z" fill="#c4c4c4"/></svg>
<svg style="left:124px;top:1768px;" width="8.8" height="13.6" viewBox="0 0 2.2 3.4"><path d="M0 0V3.4L2.1 1.7Z" fill="#c4c4c4"/></svg>
<div style="left:217.6px;top:1748.8px;width:156.8px;height:50.4px;background:#fff;border-left:2.4px solid #c6c6c6;border-right:2.4px solid #c6c6c6;box-sizing:border-box;"></div>
<div style="left:217.6px;top:1794.4px;width:156.8px;height:5.2px;background:#217346;"></div>
<span class="t" style="left:242.8px;top:1759.04px;font-size:28.8px;line-height:28.8px;color:#217346;font-weight:700;transform:scaleX(0.9370);">Tabelle1</span>
<svg style="left:443.2px;top:1758.4px;" width="33.6" height="33.6" viewBox="0 0 8.4 8.4"><circle cx="4.2" cy="4.2" r="3.7" fill="#f6f6f6" stroke="#6a6a6a" stroke-width="0.8"/><path d="M4.2 2.2V6.2M2.2 4.2H6.2" stroke="#5a5a5a" stroke-width="0.9"/></svg>
<div style="left:1819.2px;top:1769.6px;width:3.6px;height:3.6px;background:#aaa;"></div>
<div style="left:1819.2px;top:1777.6px;width:3.6px;height:3.6px;background:#aaa;"></div>
<div style="left:1819.2px;top:1785.6px;width:3.6px;height:3.6px;background:#aaa;"></div>
<div style="left:1854.4px;top:1763.2px;width:1032px;height:31.2px;background:#fff;border:2.4px solid #a8a8a8;box-sizing:border-box;border-radius:4px;"></div>
<div style="left:1854.4px;top:1763.2px;width:32px;height:31.2px;background:#fff;border:2.4px solid #999;box-sizing:border-box;"></div>
<svg style="left:1865.6px;top:1772px;" width="9.6" height="13.6" viewBox="0 0 2.4 3.4"><path d="M2.4 0V3.4L.2 1.7Z" fill="#222"/></svg>
<div style="left:2887.2px;top:1764px;width:63.2px;height:29.6px;background:#eeeeee;"></div>
<div style="left:2950.4px;top:1763.2px;width:32px;height:31.2px;background:#fff;border:2.4px solid #999;box-sizing:border-box;"></div>
<svg style="left:2962.4px;top:1772px;" width="9.6" height="13.6" viewBox="0 0 2.4 3.4"><path d="M0 0V3.4L2.2 1.7Z" fill="#222"/></svg>
<div style="left:8.4px;top:1805.2px;width:3018px;height:44.8px;background:#f3f2f1;"></div>
<span class="t" style="left:24px;top:1816.68px;font-size:26.4px;line-height:26.4px;color:#444;transform:scaleX(0.8410);">Bereit</span>
<svg style="left:124.8px;top:1814.4px;" width="30.4" height="30.4" viewBox="0 0 7.6 7.6"><circle cx="3" cy="1.2" r=".9" fill="#444"/><path d="M.4 2.4C2 3.2 4 3.2 5.6 2.4M3 3V4.6M3 4.6L1.4 7.2M3 4.6L4 5.6" fill="none" stroke="#444" stroke-width="0.7"/><path d="M4.4 5.8L5.4 6.9L7.3 4.6" fill="none" stroke="#444" stroke-width="0.7"/></svg>
<span class="t" style="left:160.8px;top:1816.68px;font-size:26.4px;line-height:26.4px;color:#444;transform:scaleX(0.8870);">Barrierefreiheit: Keine Probleme</span>
<div style="left:2373.6px;top:1806.4px;width:78.4px;height:44px;background:#cfcdcb;"></div>
<svg style="left:2396px;top:1814.4px;" width="32" height="28.8" viewBox="0 0 8 7.2"><rect x=".4" y=".4" width="7.2" height="6.4" fill="#bbb" stroke="#555" stroke-width="0.8"/><path d="M.4 2.5H7.6M.4 4.6H7.6M2.8 .4V6.8M5.2 .4V6.8" stroke="#555" stroke-width="0.6"/></svg>
<svg style="left:2480.8px;top:1814.4px;" width="32" height="28.8" viewBox="0 0 8 7.2"><rect x=".4" y=".4" width="7.2" height="6.4" fill="none" stroke="#555" stroke-width="0.8"/><rect x="2" y="1.8" width="4" height="3.6" fill="#ddd" stroke="#555" stroke-width="0.6"/></svg>
<svg style="left:2564px;top:1814.4px;" width="32" height="28.8" viewBox="0 0 8 7.2"><rect x=".4" y=".4" width="7.2" height="6.4" fill="none" stroke="#555" stroke-width="0.8"/><path d="M2.6 .4V3.6H5.4V.4" fill="none" stroke="#555" stroke-width="0.7"/></svg>
<div style="left:2634.4px;top:1826.4px;width:12.8px;height:3.2px;background:#777;"></div>
<div style="left:2661.6px;top:1826.8px;width:206.4px;height:2.8px;background:#777;"></div>
<div style="left:2760.8px;top:1815.2px;width:9.2px;height:27.2px;background:#333;"></div>
<div style="left:2879.2px;top:1826.4px;width:14.4px;height:3.2px;background:#777;"></div>
<div style="left:2884.8px;top:1820.8px;width:3.2px;height:14.4px;background:#777;"></div>
<span class="t" style="left:2925.6px;top:1816.68px;font-size:26.4px;line-height:26.4px;color:#444;transform:scaleX(0.7908);">100 %</span>
<div style="left:908.8px;top:188px;width:1836.8px;height:1459.2px;background:#fff;border:4.4px solid #6ca284;box-sizing:border-box;box-shadow:0 0 4.8px rgba(60,110,80,.4);"></div>
<div style="left:917.2px;top:1520.8px;width:1818.4px;height:120.4px;background:#f0f0f0;"></div>
<span class="t" style="left:976px;top:256.36px;font-size:41.6px;line-height:41.6px;color:#7a9c9d;transform:scaleX(0.9526);">Navigator</span>
<div style="left:2631.6px;top:208.8px;width:20.8px;height:20px;border:2.8px solid #777;box-sizing:border-box;"></div>
<svg style="left:2697.2px;top:208px;" width="22.4" height="20.8" viewBox="0 0 5.6 5.2"><path d="M.2 .1L5.4 5.1M5.4 .1L.2 5.1" stroke="#555" stroke-width="0.7"/></svg>
<div style="left:975.2px;top:336.8px;width:623.2px;height:50px;background:#fff;border:2.8px solid #a6a6a6;box-sizing:border-box;"></div>
<div style="left:990px;top:347.2px;width:3.2px;height:29.6px;background:#222;"></div>
<svg style="left:1560px;top:348.8px;" width="28" height="26.4" viewBox="0 0 7 6.6"><circle cx="4.3" cy="2.6" r="2.1" fill="none" stroke="#2b62ad" stroke-width="0.9"/><path d="M2.8 4.2L.4 6.3" stroke="#2b62ad" stroke-width="1.1"/></svg>
<div style="left:976px;top:410.4px;width:24px;height:24px;background:#fff;border:2.8px solid #b4b4b4;box-sizing:border-box;"></div>
<span class="t" style="left:1012.4px;top:408.08px;font-size:26.8px;line-height:26.8px;color:#444;transform:scaleX(0.9055);">Mehrere Elemente auswählen</span>
<span class="t" style="left:976px;top:462.88px;font-size:26.8px;line-height:26.8px;color:#444;transform:scaleX(0.9355);">Anzeigeoptionen</span>
<svg style="left:1181.2px;top:470.4px;" width="11.2" height="8" viewBox="0 0 2.8 2"><path d="M0 0H2.8L1.4 1.8Z" fill="#555"/></svg>
<svg style="left:1564px;top:458.4px;" width="32" height="33.6" viewBox="0 0 8 8.4"><path d="M.5 .5H4.2L6.4 2.7V4.2 M.5 .5V7.8H3.8 M4.1 .5V2.8H6.4" fill="none" stroke="#666" stroke-width="0.8"/><path d="M4.4 6.4C4.6 5 6.2 4.6 7.2 5.6M7.6 6.4C7.4 7.8 5.8 8.2 4.8 7.2" fill="none" stroke="#2ea04a" stroke-width="0.9"/></svg>
<div style="left:1564px;top:511.2px;width:33.6px;height:988px;background:#f0f0f0;"></div>
<svg style="left:1568px;top:551.2px;" width="24" height="15.2" viewBox="0 0 6 3.8"><path d="M.4 3.4L3 .6L5.6 3.4" fill="none" stroke="#222" stroke-width="1.15"/></svg>
<div style="left:1565.6px;top:584px;width:29.6px;height:311.2px;background:#c1c1c1;"></div>
<svg style="left:1568px;top:1446.4px;" width="24" height="15.2" viewBox="0 0 6 3.8"><path d="M.4 .4L3 3.2L5.6 .4" fill="none" stroke="#222" stroke-width="1.15"/></svg>
<div style="left:1628.8px;top:335.2px;width:3.2px;height:1164px;background:#dcdcdc;"></div>
<svg style="left:988.4px;top:536px;" width="11.2" height="11.2" viewBox="0 0 2.8 2.8"><path d="M2.8 0V2.8H0Z" fill="#333"/></svg>
<svg style="left:1009.2px;top:519.6px;" width="34.8" height="35.2" viewBox="0 0 8.7 8.8"><rect x="0" y="0" width="8.7" height="8.8" rx=".7" fill="#f68d22"/><rect x=".8" y=".8" width="2.6" height="1.9" fill="#fcc88f"/><rect x="4.4" y=".8" width="3.5" height="1.9" fill="#fcc88f"/><rect x=".8" y="3.4" width="2.6" height="1.9" fill="#fcc88f"/><rect x="4.4" y="3.4" width="3.5" height="1.9" fill="#fcc88f"/><rect x="4.4" y="6" width="3.5" height="1.4" fill="#fcc88f"/><path d="M2.1 5.8V7.8M1.1 6.8H3.1" stroke="#fff" stroke-width="0.8"/></svg>
<span class="t" style="left:1059.6px;top:525.68px;font-size:26.8px;line-height:26.8px;color:#444;transform:scaleX(1.0138);">https:/</span>
<div style="left:1136.8px;top:528px;width:126.4px;height:19.6px;background:linear-gradient(90deg,#c6c6c6,#d2d2d2 40%,#c2c2c2 70%,#cfcfcf 82%,#d8d8d8);filter:blur(.20px);"></div>
<span class="t" style="left:1266.4px;top:525.68px;font-size:26.8px;line-height:26.8px;color:#444;transform:scaleX(0.8761);">.businessexpress.cloud/a...</span>
<svg style="left:1028.8px;top:576.4px;" width="28" height="26.4" viewBox="0 0 7 6.6"><rect x=".35" y=".35" width="6.3" height="5.9" fill="#fff" stroke="#8e98a4" stroke-width="0.7"/><rect x="0" y="0" width="7" height="1.5" fill="#3f7fc9"/><path d="M2.45 1.5V6.2M4.55 1.5V6.2" stroke="#8a8f96" stroke-width="0.6"/><path d="M.4 3.9H6.6" stroke="#c2c6cc" stroke-width="0.5"/></svg>
<span class="t" style="left:1078px;top:576.88px;font-size:26.8px;line-height:26.8px;color:#444;transform:scaleX(0.9107);">Comments</span>
<svg style="left:1028.8px;top:628.52px;" width="28" height="26.4" viewBox="0 0 7 6.6"><rect x=".35" y=".35" width="6.3" height="5.9" fill="#fff" stroke="#8e98a4" stroke-width="0.7"/><rect x="0" y="0" width="7" height="1.5" fill="#3f7fc9"/><path d="M2.45 1.5V6.2M4.55 1.5V6.2" stroke="#8a8f96" stroke-width="0.6"/><path d="M.4 3.9H6.6" stroke="#c2c6cc" stroke-width="0.5"/></svg>
<span class="t" style="left:1078px;top:629px;font-size:26.8px;line-height:26.8px;color:#444;transform:scaleX(0.8947);">Dab000</span>
<svg style="left:1028.8px;top:680.64px;" width="28" height="26.4" viewBox="0 0 7 6.6"><rect x=".35" y=".35" width="6.3" height="5.9" fill="#fff" stroke="#8e98a4" stroke-width="0.7"/><rect x="0" y="0" width="7" height="1.5" fill="#3f7fc9"/><path d="M2.45 1.5V6.2M4.55 1.5V6.2" stroke="#8a8f96" stroke-width="0.6"/><path d="M.4 3.9H6.6" stroke="#c2c6cc" stroke-width="0.5"/></svg>
<span class="t" style="left:1078px;top:681.12px;font-size:26.8px;line-height:26.8px;color:#444;transform:scaleX(0.8947);">Dab005</span>
<svg style="left:1028.8px;top:732.76px;" width="28" height="26.4" viewBox="0 0 7 6.6"><rect x=".35" y=".35" width="6.3" height="5.9" fill="#fff" stroke="#8e98a4" stroke-width="0.7"/><rect x="0" y="0" width="7" height="1.5" fill="#3f7fc9"/><path d="M2.45 1.5V6.2M4.55 1.5V6.2" stroke="#8a8f96" stroke-width="0.6"/><path d="M.4 3.9H6.6" stroke="#c2c6cc" stroke-width="0.5"/></svg>
<span class="t" style="left:1078px;top:733.24px;font-size:26.8px;line-height:26.8px;color:#444;transform:scaleX(0.8947);">Dab010</span>
<svg style="left:1028.8px;top:784.88px;" width="28" height="26.4" viewBox="0 0 7 6.6"><rect x=".35" y=".35" width="6.3" height="5.9" fill="#fff" stroke="#8e98a4" stroke-width="0.7"/><rect x="0" y="0" width="7" height="1.5" fill="#3f7fc9"/><path d="M2.45 1.5V6.2M4.55 1.5V6.2" stroke="#8a8f96" stroke-width="0.6"/><path d="M.4 3.9H6.6" stroke="#c2c6cc" stroke-width="0.5"/></svg>
<span class="t" style="left:1078px;top:785.36px;font-size:26.8px;line-height:26.8px;color:#444;transform:scaleX(0.8947);">Dab020</span>
<svg style="left:1028.8px;top:837px;" width="28" height="26.4" viewBox="0 0 7 6.6"><rect x=".35" y=".35" width="6.3" height="5.9" fill="#fff" stroke="#8e98a4" stroke-width="0.7"/><rect x="0" y="0" width="7" height="1.5" fill="#3f7fc9"/><path d="M2.45 1.5V6.2M4.55 1.5V6.2" stroke="#8a8f96" stroke-width="0.6"/><path d="M.4 3.9H6.6" stroke="#c2c6cc" stroke-width="0.5"/></svg>
<span class="t" style="left:1078px;top:837.48px;font-size:26.8px;line-height:26.8px;color:#444;transform:scaleX(0.8947);">Dab035</span>
<svg style="left:1028.8px;top:889.12px;" width="28" height="26.4" viewBox="0 0 7 6.6"><rect x=".35" y=".35" width="6.3" height="5.9" fill="#fff" stroke="#8e98a4" stroke-width="0.7"/><rect x="0" y="0" width="7" height="1.5" fill="#3f7fc9"/><path d="M2.45 1.5V6.2M4.55 1.5V6.2" stroke="#8a8f96" stroke-width="0.6"/><path d="M.4 3.9H6.6" stroke="#c2c6cc" stroke-width="0.5"/></svg>
<span class="t" style="left:1078px;top:889.6px;font-size:26.8px;line-height:26.8px;color:#444;transform:scaleX(0.8947);">Dab050</span>
<svg style="left:1028.8px;top:941.24px;" width="28" height="26.4" viewBox="0 0 7 6.6"><rect x=".35" y=".35" width="6.3" height="5.9" fill="#fff" stroke="#8e98a4" stroke-width="0.7"/><rect x="0" y="0" width="7" height="1.5" fill="#3f7fc9"/><path d="M2.45 1.5V6.2M4.55 1.5V6.2" stroke="#8a8f96" stroke-width="0.6"/><path d="M.4 3.9H6.6" stroke="#c2c6cc" stroke-width="0.5"/></svg>
<span class="t" style="left:1078px;top:941.72px;font-size:26.8px;line-height:26.8px;color:#444;transform:scaleX(0.8947);">Dab055</span>
<svg style="left:1028.8px;top:993.36px;" width="28" height="26.4" viewBox="0 0 7 6.6"><rect x=".35" y=".35" width="6.3" height="5.9" fill="#fff" stroke="#8e98a4" stroke-width="0.7"/><rect x="0" y="0" width="7" height="1.5" fill="#3f7fc9"/><path d="M2.45 1.5V6.2M4.55 1.5V6.2" stroke="#8a8f96" stroke-width="0.6"/><path d="M.4 3.9H6.6" stroke="#c2c6cc" stroke-width="0.5"/></svg>
<span class="t" style="left:1078px;top:993.84px;font-size:26.8px;line-height:26.8px;color:#444;transform:scaleX(0.8947);">Dab062</span>
<svg style="left:1028.8px;top:1045.48px;" width="28" height="26.4" viewBox="0 0 7 6.6"><rect x=".35" y=".35" width="6.3" height="5.9" fill="#fff" stroke="#8e98a4" stroke-width="0.7"/><rect x="0" y="0" width="7" height="1.5" fill="#3f7fc9"/><path d="M2.45 1.5V6.2M4.55 1.5V6.2" stroke="#8a8f96" stroke-width="0.6"/><path d="M.4 3.9H6.6" stroke="#c2c6cc" stroke-width="0.5"/></svg>
<span class="t" style="left:1078px;top:1045.96px;font-size:26.8px;line-height:26.8px;color:#444;transform:scaleX(0.8947);">Dab100</span>
<svg style="left:1028.8px;top:1097.6px;" width="28" height="26.4" viewBox="0 0 7 6.6"><rect x=".35" y=".35" width="6.3" height="5.9" fill="#fff" stroke="#8e98a4" stroke-width="0.7"/><rect x="0" y="0" width="7" height="1.5" fill="#3f7fc9"/><path d="M2.45 1.5V6.2M4.55 1.5V6.2" stroke="#8a8f96" stroke-width="0.6"/><path d="M.4 3.9H6.6" stroke="#c2c6cc" stroke-width="0.5"/></svg>
<span class="t" style="left:1078px;top:1098.08px;font-size:26.8px;line-height:26.8px;color:#444;transform:scaleX(0.8947);">Dab235</span>
<svg style="left:1028.8px;top:1149.72px;" width="28" height="26.4" viewBox="0 0 7 6.6"><rect x=".35" y=".35" width="6.3" height="5.9" fill="#fff" stroke="#8e98a4" stroke-width="0.7"/><rect x="0" y="0" width="7" height="1.5" fill="#3f7fc9"/><path d="M2.45 1.5V6.2M4.55 1.5V6.2" stroke="#8a8f96" stroke-width="0.6"/><path d="M.4 3.9H6.6" stroke="#c2c6cc" stroke-width="0.5"/></svg>
<span class="t" style="left:1078px;top:1150.2px;font-size:26.8px;line-height:26.8px;color:#444;transform:scaleX(0.8947);">Dab262</span>
<svg style="left:1028.8px;top:1201.84px;" width="28" height="26.4" viewBox="0 0 7 6.6"><rect x=".35" y=".35" width="6.3" height="5.9" fill="#fff" stroke="#8e98a4" stroke-width="0.7"/><rect x="0" y="0" width="7" height="1.5" fill="#3f7fc9"/><path d="M2.45 1.5V6.2M4.55 1.5V6.2" stroke="#8a8f96" stroke-width="0.6"/><path d="M.4 3.9H6.6" stroke="#c2c6cc" stroke-width="0.5"/></svg>
<span class="t" style="left:1078px;top:1202.32px;font-size:26.8px;line-height:26.8px;color:#444;transform:scaleX(0.8947);">Dab272</span>
<svg style="left:1028.8px;top:1253.96px;" width="28" height="26.4" viewBox="0 0 7 6.6"><rect x=".35" y=".35" width="6.3" height="5.9" fill="#fff" stroke="#8e98a4" stroke-width="0.7"/><rect x="0" y="0" width="7" height="1.5" fill="#3f7fc9"/><path d="M2.45 1.5V6.2M4.55 1.5V6.2" stroke="#8a8f96" stroke-width="0.6"/><path d="M.4 3.9H6.6" stroke="#c2c6cc" stroke-width="0.5"/></svg>
<span class="t" style="left:1078px;top:1254.44px;font-size:26.8px;line-height:26.8px;color:#444;transform:scaleX(0.8947);">Dab340</span>
<svg style="left:1028.8px;top:1306.08px;" width="28" height="26.4" viewBox="0 0 7 6.6"><rect x=".35" y=".35" width="6.3" height="5.9" fill="#fff" stroke="#8e98a4" stroke-width="0.7"/><rect x="0" y="0" width="7" height="1.5" fill="#3f7fc9"/><path d="M2.45 1.5V6.2M4.55 1.5V6.2" stroke="#8a8f96" stroke-width="0.6"/><path d="M.4 3.9H6.6" stroke="#c2c6cc" stroke-width="0.5"/></svg>
<span class="t" style="left:1078px;top:1306.56px;font-size:26.8px;line-height:26.8px;color:#444;transform:scaleX(0.8947);">Dab360</span>
<svg style="left:1028.8px;top:1358.2px;" width="28" height="26.4" viewBox="0 0 7 6.6"><rect x=".35" y=".35" width="6.3" height="5.9" fill="#fff" stroke="#8e98a4" stroke-width="0.7"/><rect x="0" y="0" width="7" height="1.5" fill="#3f7fc9"/><path d="M2.45 1.5V6.2M4.55 1.5V6.2" stroke="#8a8f96" stroke-width="0.6"/><path d="M.4 3.9H6.6" stroke="#c2c6cc" stroke-width="0.5"/></svg>
<span class="t" style="left:1078px;top:1358.68px;font-size:26.8px;line-height:26.8px;color:#444;transform:scaleX(0.8947);">Dab410</span>
<svg style="left:1028.8px;top:1410.32px;" width="28" height="26.4" viewBox="0 0 7 6.6"><rect x=".35" y=".35" width="6.3" height="5.9" fill="#fff" stroke="#8e98a4" stroke-width="0.7"/><rect x="0" y="0" width="7" height="1.5" fill="#3f7fc9"/><path d="M2.45 1.5V6.2M4.55 1.5V6.2" stroke="#8a8f96" stroke-width="0.6"/><path d="M.4 3.9H6.6" stroke="#c2c6cc" stroke-width="0.5"/></svg>
<span class="t" style="left:1078px;top:1410.8px;font-size:26.8px;line-height:26.8px;color:#444;transform:scaleX(0.8948);">DabALD</span>
<svg style="left:1028.8px;top:1462.44px;" width="28" height="26.4" viewBox="0 0 7 6.6"><rect x=".35" y=".35" width="6.3" height="5.9" fill="#fff" stroke="#8e98a4" stroke-width="0.7"/><rect x="0" y="0" width="7" height="1.5" fill="#3f7fc9"/><path d="M2.45 1.5V6.2M4.55 1.5V6.2" stroke="#8a8f96" stroke-width="0.6"/><path d="M.4 3.9H6.6" stroke="#c2c6cc" stroke-width="0.5"/></svg>
<span class="t" style="left:1078px;top:1462.92px;font-size:26.8px;line-height:26.8px;color:#444;transform:scaleX(0.8946);">DabCVP</span>
<div style="left:975.6px;top:1560.8px;width:340.8px;height:48px;background:#fff;border:2.8px solid #dadada;box-sizing:border-box;"></div>
<span class="t" style="left:996px;top:1571.68px;font-size:26px;line-height:26px;color:#9c9c9c;transform:scaleX(0.8424);">Verknüpfte Tabellen auswählen</span>
<div style="left:2088px;top:1560.8px;width:140px;height:48px;background:#fff;border:2.8px solid #dadada;box-sizing:border-box;"></div>
<span class="t" style="left:2114.4px;top:1571.68px;font-size:26px;line-height:26px;color:#a6a6a6;transform:scaleX(0.7967);">Laden</span>
<div style="left:2192px;top:1562.4px;width:2.8px;height:44.8px;background:#e2e2e2;"></div>
<svg style="left:2204px;top:1581.6px;" width="12" height="8" viewBox="0 0 3 2"><path d="M0 0H3L1.5 1.8Z" fill="#888"/></svg>
<div style="left:2258px;top:1560.8px;width:246px;height:48px;background:#fff;border:2.8px solid #dadada;box-sizing:border-box;"></div>
<span class="t" style="left:2280px;top:1571.68px;font-size:26px;line-height:26px;color:#a6a6a6;transform:scaleX(0.8287);">Daten transformieren</span>
<div style="left:2532px;top:1560.8px;width:148px;height:48px;background:#fff;border:2.8px solid #dadada;box-sizing:border-box;"></div>
<span class="t" style="left:2552.8px;top:1571.68px;font-size:26px;line-height:26px;color:#333;transform:scaleX(0.8524);">Abbrechen</span>
<span class="t" style="left:1828.4px;top:901.04px;font-size:38.8px;line-height:38.8px;color:#666;transform:scaleX(0.9432);">Kein Element für die Vorschau ausgewählt</span>
</div></body></html>
